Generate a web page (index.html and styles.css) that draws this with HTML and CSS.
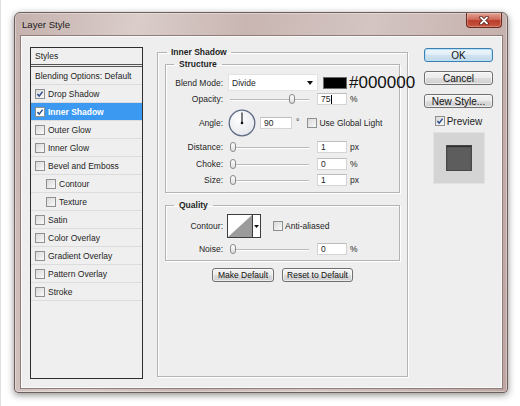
FILE: index.html
```html
<!DOCTYPE html>
<html>
<head>
    <title>Layer Style</title>
    <link rel="stylesheet" href="styles.css">
</head>
<body>
    <div class="window">
        <div class="titlebar">
            <span class="title">Layer Style</span>
            <button class="close-btn" type="button">
                <svg width="12" height="9" viewBox="0 0 12 9">
                    <path d="M3 1.5 L9 7.5 M9 1.5 L3 7.5" stroke="#4a1610" stroke-width="3.4" stroke-linecap="round"/>
                    <path d="M3 1.5 L9 7.5 M9 1.5 L3 7.5" stroke="#fff" stroke-width="1.8" stroke-linecap="round"/>
                </svg>
            </button>
        </div>

        <div class="client">
            <ul class="styles-list">
                <li class="list-head">Styles</li>
                <li class="item">Blending Options: Default</li>
                <li class="item"><span class="check on"><svg viewBox="0 0 8 8"><polyline points="1.4,4 3.2,6.1 6.6,1.6"/></svg></span>Drop Shadow</li>
                <li class="item selected"><span class="check on"><svg viewBox="0 0 8 8"><polyline points="1.4,4 3.2,6.1 6.6,1.6"/></svg></span>Inner Shadow</li>
                <li class="item"><span class="check"></span>Outer Glow</li>
                <li class="item"><span class="check"></span>Inner Glow</li>
                <li class="item"><span class="check"></span>Bevel and Emboss</li>
                <li class="item sub"><span class="check"></span>Contour</li>
                <li class="item sub"><span class="check"></span>Texture</li>
                <li class="item"><span class="check"></span>Satin</li>
                <li class="item"><span class="check"></span>Color Overlay</li>
                <li class="item"><span class="check"></span>Gradient Overlay</li>
                <li class="item"><span class="check"></span>Pattern Overlay</li>
                <li class="item"><span class="check"></span>Stroke</li>
            </ul>

            <fieldset class="group main-group">
                <legend>Inner Shadow</legend>

                <fieldset class="group structure">
                    <legend>Structure</legend>

                    <div class="row row-blend">
                        <span class="lbl">Blend Mode:</span>
                        <div class="select">
                            <span>Divide</span>
                            <svg width="6" height="4" viewBox="0 0 6 4"><polygon points="0,0 6,0 3,4" fill="#111"/></svg>
                        </div>
                        <span class="swatch"></span>
                        <span class="hex">#000000</span>
                    </div>

                    <div class="row row-opacity">
                        <span class="lbl">Opacity:</span>
                        <div class="slider"><span class="thumb" style="--v:.75"></span></div>
                        <span class="field">75<span class="caret"></span></span>
                        <span class="unit">%</span>
                    </div>

                    <div class="row row-angle">
                        <span class="lbl">Angle:</span>
                        <svg class="dial" width="28" height="28" viewBox="0 0 28 28">
                            <defs>
                                <radialGradient id="dialFill" cx="40%" cy="35%" r="70%">
                                    <stop offset="0" stop-color="#ffffff"/>
                                    <stop offset="1" stop-color="#e4e6ea"/>
                                </radialGradient>
                            </defs>
                            <circle cx="14" cy="14" r="12.8" fill="url(#dialFill)" stroke="#5d6983" stroke-width="1.3"/>
                            <line x1="14" y1="14" x2="14" y2="3.5" stroke="#111" stroke-width="1.1"/>
                            <circle cx="14" cy="14" r="1.3" fill="#111"/>
                        </svg>
                        <span class="field field-wide">90</span>
                        <span class="deg">&deg;</span>
                        <span class="check"></span>
                        <span class="check-label">Use Global Light</span>
                    </div>

                    <div class="row row-distance">
                        <span class="lbl">Distance:</span>
                        <div class="slider"><span class="thumb" style="--v:0"></span></div>
                        <span class="field">1</span>
                        <span class="unit">px</span>
                    </div>

                    <div class="row row-choke">
                        <span class="lbl">Choke:</span>
                        <div class="slider"><span class="thumb" style="--v:0"></span></div>
                        <span class="field">0</span>
                        <span class="unit">%</span>
                    </div>

                    <div class="row row-size">
                        <span class="lbl">Size:</span>
                        <div class="slider"><span class="thumb" style="--v:0"></span></div>
                        <span class="field">1</span>
                        <span class="unit">px</span>
                    </div>
                </fieldset>

                <fieldset class="group quality">
                    <legend>Quality</legend>

                    <div class="row row-contour">
                        <span class="lbl">Contour:</span>
                        <div class="contour">
                            <svg width="24" height="22" viewBox="0 0 24 22">
                                <rect width="24" height="22" fill="#fff"/>
                                <polygon points="0,22 24,0 24,22" fill="#9b9b9b"/>
                            </svg>
                            <span class="contour-arrow">
                                <svg width="5" height="3" viewBox="0 0 5 3"><polygon points="0,0 5,0 2.5,3" fill="#111"/></svg>
                            </span>
                        </div>
                        <span class="check aa"></span>
                        <span class="check-label">Anti-aliased</span>
                    </div>

                    <div class="row row-noise">
                        <span class="lbl">Noise:</span>
                        <div class="slider"><span class="thumb" style="--v:0"></span></div>
                        <span class="field">0</span>
                        <span class="unit">%</span>
                    </div>
                </fieldset>

                <div class="default-buttons">
                    <button class="btn btn-small" type="button">Make Default</button>
                    <button class="btn btn-small btn-reset" type="button">Reset to Default</button>
                </div>
            </fieldset>

            <div class="side">
                <button class="btn btn-side btn-ok" type="button">OK</button>
                <button class="btn btn-side" type="button">Cancel</button>
                <button class="btn btn-side" type="button">New Style...</button>
                <div class="preview-toggle">
                    <span class="check on"><svg viewBox="0 0 8 8"><polyline points="1.4,4 3.2,6.1 6.6,1.6"/></svg></span>
                    <span>Preview</span>
                </div>
                <div class="preview">
                    <span class="preview-swatch"></span>
                </div>
            </div>
        </div>
    </div>
</body>
</html>
```

FILE: styles.css
```css
body {
    margin: 0;
    height: 406px;
    box-sizing: border-box;
    background: #fff;
    border-left: 1px solid #e0e0e0;
    overflow: hidden;
    font-family: "Liberation Sans", Arial, sans-serif;
    font-size: 8.5px;
    color: #1e1e1e;
}

/* window frame */
.window {
    width: 494px;
    height: 381px;
    margin: 12px 0 0 13px;
    padding: 0 5px 4px 6px;
    box-sizing: border-box;
    border: 1px solid #6f5f5c;
    border-radius: 6px 6px 4px 4px;
    background: linear-gradient(100deg, #c5b1ad 0%, #dacdca 22%, #c9b6b2 42%, #d4c5c2 64%, #bea7a3 100%);
    box-shadow: 0 2px 7px rgba(0, 0, 0, 0.45), inset 0 0 0 1px rgba(255, 255, 255, 0.35);
}

.titlebar {
    height: 23px;
    display: flex;
    justify-content: space-between;
    align-items: center;
}

.title {
    padding-left: 1px;
    font-size: 9.6px;
    color: #1a1a1a;
}

.close-btn {
    align-self: flex-start;
    width: 36px;
    height: 15px;
    padding: 0;
    display: flex;
    align-items: center;
    justify-content: center;
    border: 1px solid #6d2a21;
    border-top: none;
    border-radius: 0 0 4px 4px;
    background: linear-gradient(#e2a397 0%, #cf6b5b 45%, #b83d2d 55%, #c9593f 100%);
    box-shadow: inset 0 0 0 1px rgba(255, 255, 255, 0.25);
}

/* client area */
.client {
    height: 352px;
    box-sizing: border-box;
    display: flex;
    align-items: flex-start;
    padding: 10px 8px;
    background: #eeeeee;
    border: 1px solid #fafafa;
    box-shadow: 0 0 0 1px #8f7d7a;
}

/* effects list */
.styles-list {
    width: 113px;
    height: 332px;
    box-sizing: border-box;
    flex-shrink: 0;
    margin: 0;
    padding: 0;
    list-style: none;
    border: 1px solid #2e2e2e;
    background: #efefef;
}

.list-head {
    height: 16px;
    line-height: 16px;
    padding-left: 4px;
    border-bottom: 3px double #555;
}

.item {
    height: 17px;
    display: flex;
    align-items: center;
    padding-left: 4px;
    border-bottom: 1px solid #dcdcdc;
    white-space: nowrap;
}

.item.sub {
    padding-left: 15px;
}

.item.selected {
    background: #3b99f2;
    color: #fff;
    font-weight: bold;
}

.check {
    width: 10px;
    height: 10px;
    box-sizing: border-box;
    flex-shrink: 0;
    display: inline-flex;
    align-items: center;
    justify-content: center;
    margin-right: 3px;
    border: 1px solid #8e8f8f;
    background: linear-gradient(135deg, #d9d9d9, #f9f9f9);
}

.check svg {
    width: 8px;
    height: 8px;
}

.check polyline {
    fill: none;
    stroke: #2c4d8c;
    stroke-width: 1.5;
}

.selected .check {
    background: #fff;
}

/* group boxes */
.group {
    margin: 0;
    min-width: 0;
    border: 1px solid #b3b3b3;
    box-shadow: inset 1px 1px 0 #fff, 1px 1px 0 #fff;
}

.group legend {
    font-weight: bold;
    line-height: 10px;
}

.main-group {
    width: 251px;
    box-sizing: border-box;
    flex-shrink: 0;
    align-self: stretch;
    margin-left: 14px;
    padding: 0 7px;
}

.main-group > legend {
    margin-left: 2px;
    padding: 0 4px;
}

.structure {
    margin-top: 2px;
    padding: 5px 0 6px;
}

.quality {
    margin-top: 7px;
    padding: 4px 0 5px;
}

.structure > legend,
.quality > legend {
    margin-left: 8px;
    padding: 0 5px;
}

/* control rows */
.row {
    display: flex;
    align-items: center;
    height: 12px;
    white-space: nowrap;
}

.row > * {
    flex-shrink: 0;
}

.lbl {
    width: 57px;
    text-align: right;
}

.row-blend { height: 17px; }
.row-opacity { margin-top: 2px; }
.row-angle { height: 28px; margin-top: 4px; }
.row-distance { margin-top: 4px; }
.row-choke { margin-top: 5px; }
.row-size { margin-top: 4px; }
.row-contour { height: 24px; }
.row-noise { margin-top: 5px; }

.select {
    width: 90px;
    height: 17px;
    box-sizing: border-box;
    margin-left: 5px;
    display: flex;
    align-items: center;
    justify-content: space-between;
    padding: 0 4px 0 3px;
    background: #fff;
    border: 1px solid #e3e3e3;
}

.swatch {
    width: 24px;
    height: 12px;
    box-sizing: border-box;
    margin-left: 5px;
    background: #000;
    border: 1px solid #6a6a6a;
}

.hex {
    margin-left: 2px;
    font-size: 17px;
    line-height: 17px;
    color: #111;
}

.slider {
    position: relative;
    width: 84px;
    height: 12px;
    margin-left: 5px;
}

.slider::before {
    content: "";
    position: absolute;
    left: 2px;
    right: 3px;
    top: 6px;
    height: 1px;
    background: #b9b9b9;
    box-shadow: 0 1px 0 #fff;
}

.thumb {
    position: absolute;
    top: 1px;
    left: calc(2px + var(--v) * 78px);
    width: 6px;
    height: 10px;
    box-sizing: border-box;
    border: 1px solid #8a8a8a;
    border-radius: 3px;
    background: linear-gradient(#ffffff, #dedede);
}

.field {
    width: 30px;
    height: 12px;
    box-sizing: border-box;
    margin-left: 5px;
    padding-left: 3px;
    display: flex;
    align-items: center;
    background: #fff;
    border: 1px solid #d4d4d4;
    border-top-color: #bdbdbd;
}

.field-wide {
    width: 32px;
    margin-left: 4px;
}

.caret {
    width: 1px;
    height: 9px;
    margin-left: 1px;
    background: #000;
}

.unit {
    margin-left: 3px;
}

.dial {
    margin-left: 5px;
}

.deg {
    margin-left: 4px;
    margin-top: -3px;
}

.row-angle .check {
    margin-left: 8px;
    margin-right: 2px;
}

.contour {
    width: 34px;
    height: 24px;
    box-sizing: border-box;
    margin-left: 4px;
    display: flex;
    border: 1px solid #3e3e3e;
    background: #fff;
}

.contour-arrow {
    flex: 1;
    display: flex;
    align-items: center;
    justify-content: center;
    border-left: 1px solid #3e3e3e;
}

.check.aa {
    margin-left: 12px;
    margin-right: 2px;
}

/* buttons */
.btn {
    height: 14px;
    padding: 0;
    box-sizing: border-box;
    font-family: "Liberation Sans", Arial, sans-serif;
    color: #111;
    border: 1px solid #707070;
    border-radius: 3px;
    background: linear-gradient(#f3f3f3 0%, #ebebeb 50%, #dddddd 50%, #cfcfcf 100%);
    box-shadow: inset 0 0 0 1px rgba(255, 255, 255, 0.6);
}

.btn-small {
    width: 62px;
    font-size: 8.5px;
}

.btn-reset {
    width: 71px;
}

.default-buttons {
    display: flex;
    justify-content: center;
    gap: 8px;
    margin-top: 7px;
}

.side {
    width: 69px;
    flex-shrink: 0;
    display: flex;
    flex-direction: column;
    margin-left: 16px;
    padding-top: 1px;
}

.btn-side {
    width: 69px;
    font-size: 10px;
    margin-bottom: 9px;
}

.btn-ok {
    border-color: #3c7fb1;
    background: linear-gradient(#eef6fb 0%, #e1eef7 50%, #d0e3f0 50%, #c3d9ea 100%);
    box-shadow: inset 0 0 0 1px #b8e0f6;
}

.preview-toggle {
    height: 10px;
    display: flex;
    align-items: center;
    justify-content: center;
    font-size: 10px;
    margin-top: -1px;
}

.preview-toggle .check {
    margin-right: 2px;
}

.preview {
    width: 52px;
    height: 52px;
    box-sizing: border-box;
    align-self: center;
    margin-top: 6px;
    display: flex;
    align-items: center;
    justify-content: center;
    background: #d4d4d4;
    border: 1px solid #e2e2e2;
}

.preview-swatch {
    width: 26px;
    height: 26px;
    box-sizing: border-box;
    background: #5d5d5d;
    border: 1px solid #474747;
    box-shadow: inset 0 1px 1px rgba(0, 0, 0, 0.55);
}
```
